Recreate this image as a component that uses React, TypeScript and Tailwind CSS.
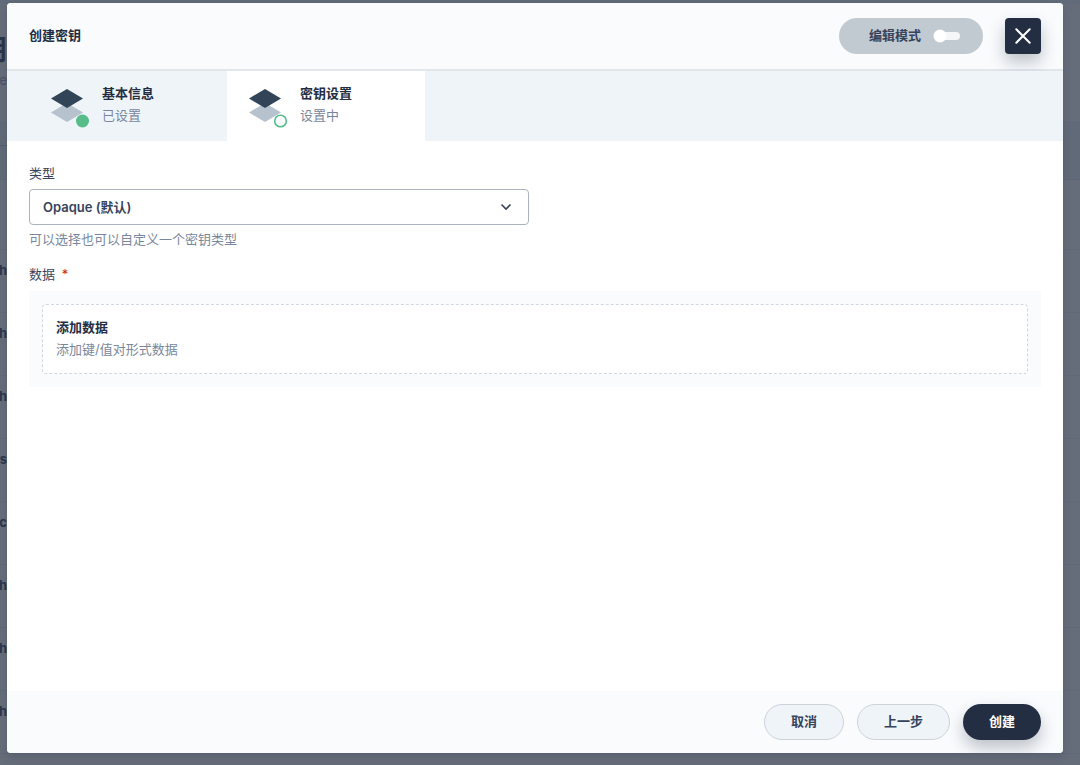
import { useState } from "react";

const secretRows = ["h", "h", "h", "rs", "xc", "h", "h", "h"];

function LayersIcon({ done }: { done: boolean }) {
  return (
    <svg width="40" height="40" viewBox="0 0 40 40" aria-hidden="true" className="shrink-0">
      <path d="M1 23.5 17 14l16 9.5L17 33z" fill="#b6c2cd" />
      <path d="M1 9.5 17 0l16 9.5L17 19z" fill="#324558" />
      {done ? (
        <circle cx="32.5" cy="32" r="6.5" fill="#55bc8a" />
      ) : (
        <circle cx="32.5" cy="32" r="5.8" fill="#fff" stroke="#55bc8a" strokeWidth="1.6" />
      )}
    </svg>
  );
}

function Step({ title, status, active }: { title: string; status: string; active: boolean }) {
  return (
    <button
      type="button"
      role="tab"
      aria-selected={active}
      className={`flex gap-3 pt-[11px] text-left ${active ? "bg-white pr-[73px] pl-[21px]" : "pr-[73px] pl-[43px]"}`}
    >
      <span className="pt-[7px]">
        <LayersIcon done={!active} />
      </span>
      <span className="flex flex-col leading-[22px]">
        <span className="font-semibold text-[#242e42]">{title}</span>
        <span className="text-[#79879c]">{status}</span>
      </span>
    </button>
  );
}

function SecretsPage() {
  return (
    <div
      aria-hidden="true"
      className="absolute inset-0 overflow-hidden bg-[#666d7a] text-[#2b364c]"
    >
      <div className="h-1 bg-[#616b79]" />
      <div className="flex h-[117px] w-[7px] flex-col items-end pt-7">
        <span className="text-[28px] leading-9 font-bold">钥</span>
        <span className="text-[13px] leading-6 text-[#48536a]">e</span>
      </div>
      <div className="h-[59px] border-b border-[#5d6777] bg-[#616a79] pt-6">
        <div className="h-px w-[7px] bg-[#525e71]" />
      </div>
      <div className="h-[70px] border-b border-[#5f6979]" />
      {secretRows.map((name, i) => (
        <div key={i} className="h-[63px] border-b border-[#5f6979]">
          <div className="flex w-[7px] justify-end pt-2 text-[13px] leading-6 font-bold">
            {name}
          </div>
        </div>
      ))}
    </div>
  );
}

export default function App() {
  const [editMode, setEditMode] = useState(false);
  return (
    <div className="relative flex min-h-screen flex-col pt-[3px] pr-[17px] pb-3 pl-[7px] font-['Inter','Noto_Sans_CJK_SC',sans-serif] text-[13px] text-[#36435c]">
      <SecretsPage />
      <form
        role="dialog"
        aria-labelledby="dialog-title"
        onSubmit={(e) => e.preventDefault()}
        className="relative flex flex-1 flex-col overflow-hidden rounded bg-white shadow-[0_4px_8px_0_rgba(36,46,66,0.2)]"
      >
        <header className="flex items-center gap-[22px] border-b-2 border-[#e1e6eb] bg-[#f9fbfd] px-[22px] py-[15px]">
          <h1 id="dialog-title" className="flex-1 font-semibold text-[#242e42]">
            创建密钥
          </h1>
          <button
            type="button"
            role="switch"
            aria-checked={editMode}
            onClick={() => setEditMode(!editMode)}
            className="flex h-9 items-center gap-3 rounded-full bg-[#c1c9d1] pr-[22px] pl-[30px] font-semibold"
          >
            编辑模式
            <svg width="28" height="14" viewBox="0 0 28 14" aria-hidden="true">
              <rect x="4" y="3" width="23" height="8" rx="4" fill="#f4f6f8" />
              <circle cx={editMode ? 21 : 7} cy="7" r="6.5" fill="#fff" />
            </svg>
          </button>
          <button
            type="button"
            aria-label="关闭"
            className="flex size-9 items-center justify-center rounded bg-[#242e42] shadow-[0_8px_16px_0_rgba(36,46,66,0.28)]"
          >
            <svg width="16" height="16" viewBox="0 0 16 16" aria-hidden="true">
              <path d="m1.3 1.3 13.4 13.4m0-13.4L1.3 14.7" fill="none" stroke="#fff" strokeWidth="2" strokeLinecap="round" />
            </svg>
          </button>
        </header>

        <div role="tablist" className="flex h-[70px] bg-[#eff4f9]">
          <Step title="基本信息" status="已设置" active={false} />
          <Step title="密钥设置" status="设置中" active />
        </div>

        <div className="flex-1 px-[22px] pt-[21px] leading-[22px]">
          <label htmlFor="secret-type" className="block">
            类型
          </label>
          <div className="relative mt-[5px] max-w-[500px]">
            <select
              id="secret-type"
              className="h-9 w-full appearance-none rounded border border-[#abb4be] bg-white px-[13px] font-semibold"
            >
              <option>Opaque (默认)</option>
            </select>
            <svg
              width="12"
              height="8"
              viewBox="0 0 12 8"
              aria-hidden="true"
              className="pointer-events-none absolute top-[14px] right-[17px]"
            >
              <path d="m1.5 1.5 4.5 4.5 4.5-4.5" fill="none" stroke="#36435c" strokeWidth="1.6" />
            </svg>
          </div>
          <p className="mt-[3px] text-[#79879c]">可以选择也可以自定义一个密钥类型</p>

          <h2 className="mt-[13px]">
            数据 <span className="ml-[3px] text-[#ca2621]">*</span>
          </h2>
          <div className="mt-[6px] bg-[#f9fbfd] p-[13px]">
            <button
              type="button"
              className="flex w-full flex-col rounded border border-dashed border-[#d1d7df] bg-white px-[13px] pt-[11px] pb-[13px] text-left"
            >
              <span className="font-semibold text-[#242e42]">添加数据</span>
              <span className="text-[#79879c]">添加键/值对形式数据</span>
            </button>
          </div>
        </div>

        <footer className="flex justify-end gap-[13px] bg-[#f9fbfd] px-[22px] py-[13px] font-semibold">
          <button type="button" className="h-9 rounded-full border border-[#ccd3db] bg-[#eff4f9] px-[26px]">
            取消
          </button>
          <button type="button" className="h-9 rounded-full border border-[#ccd3db] bg-[#eff4f9] px-[26px]">
            上一步
          </button>
          <button
            type="submit"
            className="h-9 rounded-full bg-[#242e42] px-[26px] text-white shadow-[0_8px_16px_0_rgba(36,46,66,0.28)]"
          >
            创建
          </button>
        </footer>
      </form>
    </div>
  );
}
